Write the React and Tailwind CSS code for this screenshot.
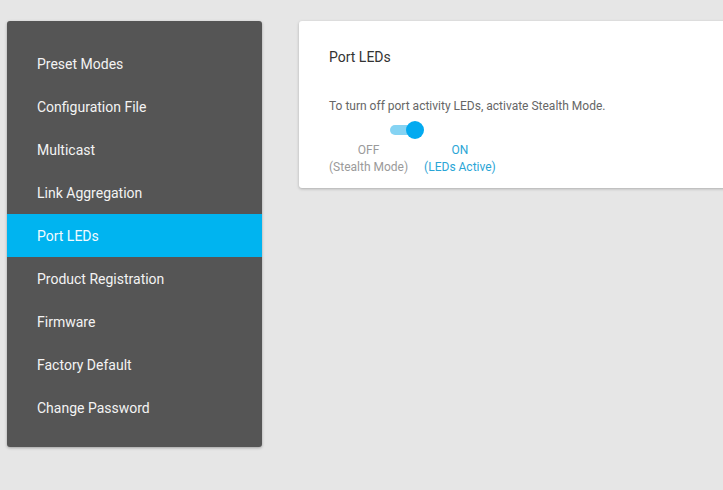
const items = [
    "Preset Modes",
    "Configuration File",
    "Multicast",
    "Link Aggregation",
    "Port LEDs",
    "Product Registration",
    "Firmware",
    "Factory Default",
    "Change Password",
];

const App = () => {
    return (
        <div className="w-[723px] h-[490px] overflow-hidden bg-[#e6e6e6] flex flex-row items-start pt-[21px] pl-[7px] gap-[37px]" style={{ fontFamily: "Roboto, 'Liberation Sans', sans-serif" }}>
            <div className="w-[255px] shrink-0 bg-[#555555] rounded-[3px] shadow-[0_1px_3px_rgba(0,0,0,0.3)] pt-[21px] pb-[18px]">
                {items.map((item) => (
                    <div
                        key={item}
                        className={
                            item === "Port LEDs"
                                ? "h-[43px] flex items-center pl-[30px] pt-[2px] text-[14px] text-[#f2fbff] bg-[#00b4f0]"
                                : "h-[43px] flex items-center pl-[30px] pt-[2px] text-[14px] text-[#f3f3f3]"
                        }
                    >
                        {item}
                    </div>
                ))}
            </div>

            <div className="w-[460px] shrink-0 bg-white rounded-[3px] shadow-[0_1px_3px_rgba(0,0,0,0.25)] pt-[26px] px-[30px] pb-[12px]">
                <div className="text-[14px] leading-[20px] text-[#333333]">Port LEDs</div>
                <div className="mt-[31px] text-[12px] leading-[16px] text-[#666666]">
                    To turn off port activity LEDs, activate Stealth Mode.
                </div>
                <div className="mt-[6px] ml-[61px] relative w-[34px] h-[20px]">
                    <div className="absolute left-0 top-[5px] w-[28px] h-[10px] rounded-full bg-[#85d3f3]" />
                    <div className="absolute right-0 top-[1px] w-[18px] h-[18px] rounded-full bg-[#03aaf0]" />
                </div>
                <div className="mt-[2px] flex flex-row gap-[16px] text-[12px] leading-[17px]">
                    <div className="flex flex-col items-center text-[#9a9a9a]">
                        <span>OFF</span>
                        <span>(Stealth Mode)</span>
                    </div>
                    <div className="flex flex-col items-center text-[#2aa5d6]">
                        <span>ON</span>
                        <span>(LEDs Active)</span>
                    </div>
                </div>
            </div>
        </div>
    );
};

export default App;
